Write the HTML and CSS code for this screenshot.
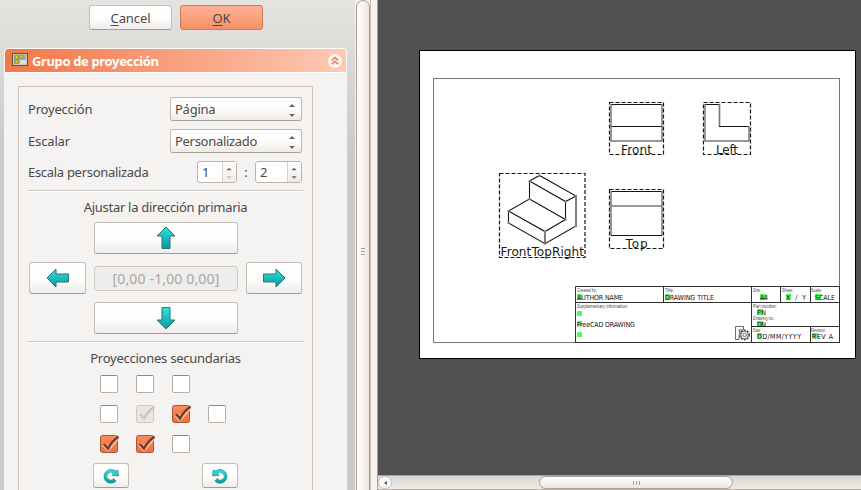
FILE: index.html
```
<!DOCTYPE html>
<html lang="es">
<head>
<meta charset="utf-8">
<title>Grupo de proyección</title>
<link rel="stylesheet" href="styles.css">
</head>
<body>
<svg class="defs" width="0" height="0" aria-hidden="true">
  <defs>
    <linearGradient id="teal" x1="0" y1="0" x2="0" y2="1"><stop offset="0" stop-color="#34e0e2"/><stop offset="1" stop-color="#069a9c"/></linearGradient>
    <linearGradient id="orange" x1="0" y1="0" x2="0" y2="1"><stop offset="0" stop-color="#fa8a5c"/><stop offset="1" stop-color="#f06e3e"/></linearGradient>
    <symbol id="checked" viewBox="0 0 22 20">
      <rect x="1.5" y="1.5" width="17" height="17" rx="2" fill="url(#orange)" stroke="#a5583c"/>
      <path d="M5 10.5 9 14.5 18.5 3.5" fill="none" stroke="#ffb595" stroke-width="4.6"/>
      <path d="M5 10 9 14.5Q13 7 19.5 2.5" fill="none" stroke="#713d2b" stroke-width="2.5"/>
    </symbol>
    <symbol id="checked-off" viewBox="0 0 22 20">
      <rect x="1.5" y="1.5" width="17" height="17" rx="2" fill="#e9e6e3" stroke="#cfc8c2"/>
      <path d="M5 10 9 14.5Q13 7 19.5 2.5" fill="none" stroke="#cdc6c0" stroke-width="2.5"/>
    </symbol>
    <symbol id="turn" viewBox="0 0 18 18">
      <path d="M14.200 14A7 7 0 1 1 13.200 3.800L16 3 16.500 9 10 8.600 11.200 6.400A3.800 3.800 0 1 0 11.700 11.600Z" fill="url(#teal)" stroke="#217779" stroke-width=".5"/>
    </symbol>
  </defs>
</svg>
<div class="app">
  <aside class="tasks">
    <div class="dialog-buttons"><button class="btn"><span><u>C</u>ancel</span></button><button class="btn ok"><span><u>O</u>K</span></button></div>
    <section class="group">
      <header class="group-head">
        <svg width="16" height="14" viewBox="0 0 16 14"><rect x=".5" y=".5" width="15" height="12" fill="#c8ccc4" stroke="#6b5043"/><path d="M2 2h12v9H2Z" fill="#a5aca5"/><path d="M3 2h3v4H3zM8 2h3v3H8zM3 7h3v3H3z" fill="#e8d900" stroke="#77751a" stroke-width=".6"/><path d="M8 7h6v4H8z" fill="#dedfdc"/></svg>
        <h1>Grupo de proyección</h1>
        <svg class="collapse" width="14" height="14" viewBox="0 0 14 14"><circle cx="7" cy="7" r="7" fill="#fbf5f2"/><path d="M3.800 6.500 7 3.500l3.200 3M3.800 10.300 7 7.300l3.200 3" fill="none" stroke="#ee7448" stroke-width="1.500"/></svg>
      </header>
      <div class="group-body"><div class="frame">
        <div class="row"><label class="l1">Proyección</label><div class="combo"><span class="c1">Página</span><i class="ticks"></i></div></div>
        <div class="row"><label class="l2">Escalar</label><div class="combo"><span class="c2">Personalizado</span><i class="ticks"></i></div></div>
        <div class="row scale"><label class="l3">Escala personalizada</label><div class="spin"><span>1</span><div class="steps low"><i class="ticks"></i></div></div><b class="colon">:</b><div class="spin wide"><span>2</span><div class="steps"><i class="ticks"></i></div></div></div>
        <hr>
        <h2><span class="t1">Ajustar la dirección primaria</span></h2>
        <div class="directions">
          <button class="btn up"><svg width="20" height="24" viewBox="0 0 20 24"><path d="M10 1 19 10H14V22.500H6V10H1Z" fill="url(#teal)" stroke="#287577"/></svg></button>
          <button class="btn left"><svg width="24" height="20" viewBox="0 0 24 20"><path d="M1 10 10 1V6H22.500V14H10V19Z" fill="url(#teal)" stroke="#287577"/></svg></button>
          <div class="vector"><span>[0,00 -1,00 0,00]</span></div>
          <button class="btn right"><svg width="24" height="20" viewBox="0 0 24 20"><path d="M23 10 14 1V6H1.500V14H14V19Z" fill="url(#teal)" stroke="#287577"/></svg></button>
          <button class="btn down"><svg width="20" height="24" viewBox="0 0 20 24"><path d="M10 23 19 14H14V1.500H6V14H1Z" fill="url(#teal)" stroke="#287577"/></svg></button>
        </div>
        <hr>
        <h2><span class="t2">Proyecciones secundarias</span></h2>
        <div class="checks">
          <i class="box"></i><i class="box"></i><i class="box"></i><span></span>
          <i class="box"></i><svg class="mark"><use href="#checked-off"/></svg><svg class="mark"><use href="#checked"/></svg><i class="box"></i>
          <svg class="mark"><use href="#checked"/></svg><svg class="mark"><use href="#checked"/></svg><i class="box"></i><span></span>
        </div>
        <div class="turns"><button class="btn"><svg width="18" height="18"><use href="#turn"/></svg></button><button class="btn"><svg class="flip" width="18" height="18"><use href="#turn"/></svg></button></div>
      </div></div>
    </section>
  </aside>
  <div class="vscroll"><div class="grip"></div></div>
  <div class="splitter"></div>
  <main class="view">
    <div class="canvas">
      <svg class="sheet" width="437" height="309" viewBox="419 50 437 309">
        <rect x="419.500" y="50.500" width="436" height="308" fill="#fff" stroke="#000"/>
        <rect x="433.500" y="78.500" width="406" height="264" fill="none" stroke="#777"/>
        <g fill="none" stroke="#161616" stroke-width="1.200" stroke-dasharray="4 2">
          <rect x="609.500" y="102.500" width="54" height="52"/><rect x="703.500" y="102.500" width="47" height="52"/><rect x="609.500" y="189.500" width="54" height="59"/><rect x="499.500" y="173.500" width="85.500" height="84"/>
        </g>
        <g fill="none" stroke="#151515" stroke-width="1.100">
          <path d="M611 104.500H662M611 126.500H662M705 104.500H719.500V126.500H749M611 191.500H662M611 235.500H662"/>
          <path d="M529.500 181 539.500 175.500 576 196V226L545 243.700 508.500 223V211L529.500 199ZM529.500 181 565.500 201.500 576 196M529.500 199 565.500 219.500V201.500M508.500 211 545 231.500 565.500 219.500M545 231.500V243.700"/>
        </g>
        <path d="M611 104V141H662V104M719.500 104V126M705 104V141H749V126M611 191V235M662 191V235M611 206H662" fill="none" stroke="#777" stroke-width="1.500"/>
        <g fill="#888"><circle cx="529.500" cy="181" r="1.200"/><circle cx="539.500" cy="175.500" r="1.200"/><circle cx="576" cy="196" r="1.200"/><circle cx="576" cy="226" r="1.200"/><circle cx="545" cy="243.700" r="1.200"/><circle cx="508.500" cy="223" r="1.200"/><circle cx="508.500" cy="211" r="1.200"/><circle cx="529.500" cy="199" r="1.200"/><circle cx="565.500" cy="201.500" r="1.200"/><circle cx="565.500" cy="219.500" r="1.200"/><circle cx="545" cy="231.500" r="1.200"/></g>
        <g class="view-label">
          <text x="621" y="154" textLength="31">Front</text><text x="716" y="154" textLength="22">Left</text><text x="625.500" y="248" textLength="22">Top</text><text x="500.500" y="256" textLength="83.500">FrontTopRight</text>
        </g>
        <path d="M575.500 342V286.500H839M575.500 302.500H839M663.500 286V302M751.500 286V342M780.500 286V302M810.500 286V302M751.500 326.500H839M810.500 326V342M839.500 286V342.500H575" fill="none" stroke="#303030"/>
        <g fill="#00ff10" fill-opacity=".7"><rect x="577" y="294" width="5" height="6"/><rect x="665" y="294" width="5" height="6"/><rect x="760" y="294" width="6" height="6"/><rect x="786" y="294" width="5" height="6"/><rect x="815" y="294" width="6" height="6"/><rect x="757" y="309" width="6" height="6"/><rect x="757" y="321" width="6" height="5"/><rect x="757" y="333" width="5" height="5"/><rect x="812" y="333" width="6" height="5"/><rect x="577" y="311" width="5" height="5"/><rect x="577" y="321" width="5" height="5"/><rect x="577" y="332" width="5" height="5"/></g>
        <g class="caption"><text x="577" y="292" textLength="20" lengthAdjust="spacingAndGlyphs">Created by:</text><text x="665" y="292" textLength="9" lengthAdjust="spacingAndGlyphs">Title:</text><text x="753" y="292" textLength="8" lengthAdjust="spacingAndGlyphs">Size:</text><text x="782" y="292" textLength="11" lengthAdjust="spacingAndGlyphs">Sheet:</text><text x="811" y="292" textLength="11" lengthAdjust="spacingAndGlyphs">Scale:</text><text x="577" y="308" textLength="51" lengthAdjust="spacingAndGlyphs">Supplementary information:</text><text x="753" y="308" textLength="24" lengthAdjust="spacingAndGlyphs">Part number:</text><text x="753" y="320" textLength="22" lengthAdjust="spacingAndGlyphs">Drawing no.:</text><text x="753" y="331.500" textLength="8" lengthAdjust="spacingAndGlyphs">Date:</text><text x="811" y="331.500" textLength="15" lengthAdjust="spacingAndGlyphs">Revision:</text></g>
        <g class="value"><text x="577" y="300" textLength="46">AUTHOR NAME</text><text x="665" y="300" textLength="49">DRAWING TITLE</text><text x="760" y="300" textLength="8">A4</text><text x="786" y="300" textLength="20">X / Y</text><text x="815" y="300" textLength="20">SCALE</text><text x="757" y="315" textLength="9">PN</text><text x="757" y="326.500" textLength="9">DN</text><text x="757" y="338.500" textLength="44">DD/MM/YYYY</text><text x="812" y="338.500" textLength="21">REV A</text><text x="577" y="326.500" textLength="58">FreeCAD DRAWING</text></g>
        <g fill="#fff" stroke="#444" stroke-width=".8"><path d="M735.500 326.500H743.500V330H739V332H742V335H739V339.500H735.500Z"/><circle cx="744.500" cy="335" r="4.700" stroke-width="1.500" stroke-dasharray="1.900 1.100"/><circle cx="744.500" cy="335" r="3.800"/><circle cx="744.500" cy="335" r="1.700"/></g>
      </svg>
    </div>
    <div class="hscroll"><div class="arrow"></div><div class="thumb"></div></div>
  </main>
</div>
</body>
</html>
```
FILE: styles.css
```
* { box-sizing: border-box; }
body { margin: 0; width: 861px; height: 490px; overflow: hidden; background: #f5f3f1; color: #4b4948; font: 13px/18px "Noto Sans", sans-serif; }
.defs { position: absolute; }
svg { display: block; flex: none; }
.app { display: flex; height: 490px; }
.tasks { width: 355px; padding: 5px 8px 0 4px; background: linear-gradient(#e5e4e1, #cbcac8 150px); overflow: hidden; }
.dialog-buttons { display: flex; gap: 8px; padding-left: 85px; height: 43px; }
.btn { display: flex; align-items: center; justify-content: center; padding: 0; border: 1px solid #c6bdb5; border-bottom-color: #a89c94; border-radius: 3px; background: linear-gradient(#fff, #fdfdfc 55%, #efecea); color: inherit; font: inherit; }
.dialog-buttons .btn { width: 83px; height: 25px; }
.dialog-buttons .btn span { padding-top: 1px; letter-spacing: -.1px; }
.dialog-buttons u { text-underline-offset: 2px; text-decoration-thickness: 1px; }
.dialog-buttons .ok { background: linear-gradient(#ffb293, #f79068); border-color: #c9795c; }
.group-head { display: flex; align-items: center; width: 343px; height: 25px; padding: 0 4px 1px 7px; border: 1px solid #fff; border-radius: 4px 4px 0 0; background: linear-gradient(90deg, #f17746, #ffc9b5); }
h1, h2 { margin: 0; font: inherit; }
h1 { flex: 1; margin-left: 4px; padding-top: 2px; color: #fff; font-weight: 700; letter-spacing: -.36px; white-space: nowrap; }
.collapse { margin-top: 2px; }
.group-body { width: 343px; height: 420px; padding: 13px 14px 0; background: #f5f3f1; }
.frame { width: 295px; height: 420px; padding: 10px 10px 0 9px; border: 1px solid #cbc2b9; }
.row { display: flex; align-items: center; height: 24px; margin-bottom: 8px; white-space: nowrap; }
.row label { flex: 1; padding-bottom: 1px; }
.l1 { letter-spacing: -.2px; }
.l2 { letter-spacing: -.15px; }
.l3 { letter-spacing: -.3px; }
.c1 { letter-spacing: -.25px; }
.c2 { letter-spacing: -.3px; }
.t1 { letter-spacing: -.28px; }
.t2 { letter-spacing: -.25px; }
.combo { display: flex; align-items: center; justify-content: space-between; width: 132px; height: 24px; padding: 0 5px 0 4px; border: 1px solid #c2b8ae; border-bottom-color: #a99e94; border-radius: 3px; background: linear-gradient(#fff, #fdfdfc 50%, #eeebe8); }
.ticks { position: relative; display: block; width: 7px; height: 14px; }
.ticks::before, .ticks::after { content: ""; position: absolute; left: 0; border: 3.500px solid transparent; }
.ticks::before { top: 2px; border-top-width: 0; border-bottom: 3px solid #666; }
.ticks::after { bottom: -1px; border-bottom-width: 0; border-top: 3px solid #666; }
.scale { height: 22px; margin-bottom: 7px; }
.spin { display: flex; width: 40px; height: 22px; border: 1px solid #bfb4aa; border-radius: 3px; background: #fff; overflow: hidden; }
.spin.wide { width: 47px; }
.spin > span { flex: 1; padding: 1px 0 0 4px; }
.steps { display: flex; align-items: center; justify-content: center; width: 14px; border-left: 1px solid #d8d0c9; background: linear-gradient(#fff, #eeeae7); }
.steps .ticks { transform: scale(.85); }
.low .ticks::after { border-top-color: #bbb; }
.colon { width: 18px; text-align: center; font-weight: 400; }
hr { width: 275px; height: 2px; margin: 0 0 6px; border: 0; border-top: 1px solid #cac6c2; background: #fff; }
h2 { height: 18px; width: 275px; text-align: center; white-space: nowrap; }
.directions { display: grid; grid-template: 32px 32px 32px / 57px 144px 56px; gap: 8px; margin: 6px 0 7px 1px; align-items: center; }
.directions .btn { height: 32px; }
.up { grid-area: 1 / 2; }
.left { grid-area: 2 / 1; }
.vector { grid-area: 2 / 2; }
.right { grid-area: 2 / 3; }
.down { grid-area: 3 / 2; }
.vector { display: flex; justify-content: center; align-items: center; height: 25px; padding-top: 1px; border: 1px solid #d0c9c1; border-radius: 3px; background: #efedeb; color: #a8a6a4; font-size: 14px; letter-spacing: .15px; white-space: nowrap; }
.checks { display: grid; grid-template-columns: repeat(4, 18px); grid-auto-rows: 18px; column-gap: 18px; row-gap: 12px; margin: 8px 0 0 72px; }
.box { width: 18px; height: 18px; border: 1px solid #b8aea5; border-top-color: #93867d; border-radius: 2px; background: #fff; }
.mark { width: 22px; height: 20px; margin: -1px 0 -1px -1px; }
.turns { display: flex; gap: 73px; margin: 10px 0 0 65px; }
.turns .btn { width: 36px; height: 25px; }
.flip { transform: scaleX(-1); }
.vscroll { display: flex; flex: none; align-items: center; justify-content: center; width: 14px; margin-left: 1px; height: 510px; border: 1px solid #a99c94; border-radius: 7px 7px 0 0; background: linear-gradient(90deg, #fff, #eee7e1); }
.grip { width: 4px; height: 8px; margin-bottom: 6px; background: repeating-linear-gradient(#aaa09a 0 1px, transparent 1px 3px); }
.splitter { flex: none; width: 8px; border-left: 1px solid #c9bdb4; border-right: 1px solid #aaa09a; background: #f5f3f1; }
.view { width: 483px; flex: none; }
.canvas { height: 475px; padding: 50px 0 0 41px; background: #505050; }
.view-label { fill: #1a1a1a; font: 12px "DejaVu Sans", sans-serif; }
.caption { fill: #444; font: 4.500px "Liberation Sans", sans-serif; }
.value { fill: #111; font: 7px "DejaVu Sans Condensed", "DejaVu Sans", sans-serif; }
.hscroll { display: flex; height: 15px; border-top: 1px solid #aaa098; border-bottom: 1px solid #bbb1a9; background: linear-gradient(#ddd7d2, #eeeae6); }
.arrow { display: flex; align-items: center; justify-content: center; width: 14px; border: 1px solid #c6bdb5; border-radius: 7px; background: #fbfaf9; }
.arrow::after { content: ""; border: 2px solid transparent; border-right: 3px solid #555; border-left: 0; }
.thumb { display: flex; align-items: center; justify-content: center; width: 194px; margin-left: 147px; border: 1px solid #a99e96; border-radius: 7px; background: linear-gradient(#fff, #ece6e1); }
.thumb::after { content: ""; width: 7px; height: 4px; background: repeating-linear-gradient(90deg, #aaa09a 0 1px, transparent 1px 3px); }
```
